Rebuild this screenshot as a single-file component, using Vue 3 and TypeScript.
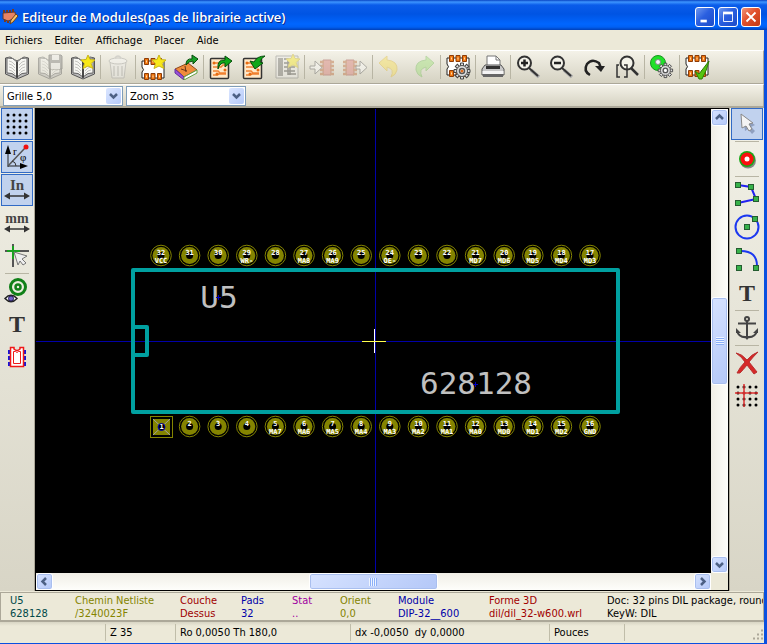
<script setup lang="ts">
import { ref } from 'vue'

interface Tool { id: string; label: string; icon: string; off?: boolean }
interface Pad { num: number; name: string; x: number; y: number }

const pcb = (x: number, y: number): string => `<g transform="translate(${x} ${y})">
<path d="M1 4H23V21H1V15Q4 13 1 10Z" fill="#fff" stroke="#222" stroke-width="1"/>
<g fill="#f07810" stroke="#8c3c08"><path d="M3.500 1.500h4v6h-4zM10 1.500h4v6h-4zM16.500 1.500h4v6h-4zM3.500 16.500h4v6h-4zM10 16.500h4v6h-4zM16.500 16.500h4v6h-4z"/></g>
<path d="M5 4.500h1M11.500 4.500h1M18 4.500h1M5 19.500h1M11.500 19.500h1M18 19.500h1" stroke="#ffd9b0" stroke-width="2"/></g>`
const openBook = `<path d="M1.500 4L6 3L13 7L20 3L24.500 4V20L13 25L1.500 20Z" fill="#bbb" stroke="#555"/>
<path d="M3 4Q9 3 13 8V23Q8 18 3 19ZM23 4Q17 3 13 8V23Q18 18 23 19Z" fill="#f6f6f2" stroke="#666"/>
<path d="M5 7q3 0 6 4M5 10q3 0 6 4M5 13q3 0 6 4M5 16q3 0 6 4M21 7q-3 0-6 4M21 10q-3 0-6 4M21 13q-3 0-6 4M21 16q-3 0-6 4" fill="none" stroke="#c4c4c0"/>
<path d="M13 8V24" stroke="#333" stroke-width="1.500"/>`
const star = (x: number, y: number): string => `<path transform="translate(${x} ${y})" d="M0-7L2-2.500L7-2L3 1.500L5 6.500L0 4L-5 6.500L-3.500 1.500L-7-2L-2-2.500Z" fill="#f8e818" stroke="#c9b51a"/>`
const sheet = `<rect x="2.500" y="4.500" width="18" height="20" rx="1" fill="#ffe8c8" stroke="#333" stroke-width="1.500"/>
<path d="M5 9h5l2 2M5 13h8l2-2h3M5 17h5l2 2h6M5 21h4l2-1h7" fill="none" stroke="#f08030" stroke-width="1.500"/><circle cx="6" cy="9" r="1.500" fill="#e66b10"/><circle cx="17" cy="16" r="1.500" fill="#e66b10"/><circle cx="9" cy="20" r="1.500" fill="#e66b10"/>`
const teeth = Array.from({ length: 8 }, (_, i) => `<path d="M-1.500-8h3v3h-3z" transform="rotate(${i * 45})"/>`).join('')
const gear = (x: number, y: number): string => `<g transform="translate(${x} ${y})"><g fill="#ddd" stroke="#444">${teeth}</g><circle r="5.500" fill="#ddd" stroke="#555"/><circle r="2.500" fill="#fff" stroke="#555" stroke-width="1.500"/></g>`
const ic = `<path d="M8 6h8v15H8z" fill="#d9736e" stroke="#9c3c38"/><path d="M5 8h4M5 12h4M5 16h4M5 20h4M15 8h4M15 12h4M15 16h4M15 20h4" stroke="#b8602c" stroke-width="2.500"/>`
const lens = `<path d="M16 16L24 23" stroke="#aaa" stroke-width="3.500"/><path d="M14 14L23 22" stroke="#333" stroke-width="2"/><circle cx="9.500" cy="9" r="6.500" fill="#f4f3ea" stroke="#333" stroke-width="2"/>`
const arrows = `<path d="M4 19H22" stroke="#333" stroke-width="1.500"/><path d="M0 19L6 15.500V22.500ZM26 19L20 15.500V22.500Z" fill="#333"/>`
const greenArrow = `<path d="M10 15Q9 5 17 6V2L24 7L17 13V9Q12 8 10 15Z" fill="#10a818" stroke="#064d0b"/>`
const dot = (x: number, y: number): string => `<rect x="${x - 2.5}" y="${y - 2.5}" width="5" height="5" fill="#37b24a" stroke="#245c30"/>`
const grid = (xs: number[], ys: number[]): string => ys.flatMap(y => xs.map(x => `<circle cx="${x}" cy="${y}" r="1.500"/>`)).join('')
const letterT = `<text x="13" y="21" text-anchor="middle" font-family="Liberation Serif, serif" font-size="24" font-weight="bold" fill="#333">T</text>`

const groups: Tool[][] = [
  [
    { id: 'lib', label: 'Librairie active', icon: openBook },
    { id: 'savelib', label: 'Sauver en librairie', off: true, icon: `${openBook}<path d="M12 1h12l1 1v13H12z" fill="#777" stroke="#444"/><path d="M15 1h7v5h-7zM14 9h9v6h-9z" fill="#eee"/>` },
    { id: 'newlib', label: 'Nouvelle librairie', icon: openBook + star(18, 8) },
  ],
  [{ id: 'trash', label: 'Supprimer', off: true, icon: '<path d="M5 8H21L19 24H7Z" fill="#eee" stroke="#999"/><ellipse cx="13" cy="7" rx="9" ry="3" fill="#f8f8f8" stroke="#999"/><path d="M10 4q3-4 6 0M9 12v10M13 12v10M17 12v10" stroke="#aaa" stroke-width="1.500" fill="none"/>' }],
  [
    { id: 'newmod', label: 'Nouveau module', icon: pcb(1, 3) + star(19, 8) },
    { id: 'loadlib', label: 'Charger module', icon: `<path d="M2 15L15 9L24 16L11 23Z" fill="#ef8c3c" stroke="#8f481b"/><path d="M2 15L11 23V26L2 19Z" fill="#9b50d8" stroke="#60309c"/><path d="M11 23L24 16V19L11 26Z" fill="#fff" stroke="#60a040"/><path d="M8 15l6 2M12 12l1 6" stroke="#67351b"/><path d="M13 11Q13 4 19 5V1L25 5L20 10V7Q16 7 13 11Z" fill="#18a026" stroke="#064d0b"/>` },
  ],
  [
    { id: 'loadboard', label: 'Charger module du C.I.', icon: sheet + greenArrow },
    { id: 'update', label: 'Remplacer module', icon: sheet + '<path d="M24 2Q20 4 19 8L22 9L14 15L9 7L13 8Q16 2 24 2Z" fill="#10a818" stroke="#064d0b"/>' },
    { id: 'insert', label: 'Placer module', off: true, icon: `<path d="M2 2H24V24H2Z" fill="#eee" stroke="#777"/><path d="M4 4h5v18H4z" fill="#666"/><path d="M10 5h4v16M10 9h6v12M10 13h11M10 17h11M14 20h8" fill="none" stroke="#333" stroke-width="1.500"/>${star(19, 7)}` },
  ],
  [
    { id: 'import', label: 'Importer', off: true, icon: `<g transform="translate(6 0)">${ic}</g><path d="M1 12H6V7L13 13.500L6 20V15H1Z" fill="#fff" stroke="#555"/>` },
    { id: 'export', label: 'Exporter', off: true, icon: `<g transform="translate(-4 0)">${ic}</g><path d="M14 12H18V7L25 13.500L18 20V15H14Z" fill="#fff" stroke="#555"/>` },
  ],
  [
    { id: 'undo', label: 'Annuler', off: true, icon: '<path d="M2 9L10 2V6Q21 7 20 16Q19 21 14 23Q18 15 10 13V17Z" fill="#fbe04a" stroke="#e0bb35"/>' },
    { id: 'redo', label: 'Refaire', off: true, icon: '<path d="M24 9L16 2V6Q5 7 6 16Q7 21 12 23Q8 15 16 13V17Z" fill="#98e070" stroke="#74bb58"/>' },
  ],
  [{ id: 'props', label: 'Propriétés du module', icon: `${pcb(1, 0)}${gear(17, 17)}<circle cx="17" cy="17" r="1.500" fill="#e06a1c"/>` }],
  [{ id: 'print', label: 'Imprimer', icon: '<path d="M7 12V2H16L20 6V12Z" fill="#fff" stroke="#777"/><path d="M16 2V6H20" fill="none" stroke="#777"/><path d="M5 11H21L24 15V21H2V15Z" fill="#c8c8c8" stroke="#555"/><path d="M6 12H20V15H6Z" fill="#333"/><path d="M2.500 17H23.500V20H2.500Z" fill="#f4f4f4"/><path d="M3 20H23V23H3Z" fill="#666"/>' }],
  [
    { id: 'zoomin', label: 'Zoom +', icon: `${lens}<path d="M6 9H13M9.500 5.500V12.500" stroke="#222" stroke-width="2.500"/>` },
    { id: 'zoomout', label: 'Zoom -', icon: `${lens}<path d="M6 9H13" stroke="#222" stroke-width="2.500"/>` },
    { id: 'redraw', label: 'Redessin', icon: '<path d="M9 21Q2 17 6 10Q11 4 18 9L20 14" fill="none" stroke="#222" stroke-width="2.500"/><path d="M14 12H24L20 18Z" fill="#222"/>' },
    { id: 'fit', label: 'Zoom automatique', icon: '<circle cx="13" cy="9" r="6.500" fill="#f4f3ea" stroke="#333" stroke-width="2"/><path d="M17 14L24 21" stroke="#333" stroke-width="2.500"/><path d="M5 11H3V23H6M10 11H13V23H10" fill="none" stroke="#333" stroke-width="1.500"/>' },
  ],
  [{ id: 'pads', label: 'Réglage pads', icon: `<circle cx="9" cy="9" r="7.500" fill="#1fe02a" stroke="#18951e"/><circle cx="9" cy="8" r="2.500" fill="#f4f4ff" stroke="#888"/><g transform="translate(2 2) scale(0.900)">${gear(16, 16)}</g>` }],
  [{ id: 'check', label: 'Vérifier module', icon: `${pcb(1, 0)}<path d="M11 17L15 20L25 7Q23 16 18 25H15Z" fill="#55c410" stroke="#2c7d07"/>` }],
]

const leftTools: Tool[][] = [
  [
    { id: 'grid', label: 'Grille', icon: grid([4, 10, 16, 22], [4, 10, 16, 22]) },
    { id: 'polar', label: 'Coordonnées polaires', icon: '<path d="M4 23V8M4 22H19" stroke="#222"/><path d="M4 1L7 10H1ZM24 22L16 19V25Z" fill="#000"/><path d="M4 22L21 4" stroke="#555" stroke-width="1.500"/><circle cx="22" cy="3" r="2.500" fill="#f01010"/><path d="M8 17Q12 18 12 22" fill="none" stroke="#333"/><text x="9" y="11" font-family="Liberation Serif, serif" font-size="11">r</text><text x="16" y="17" font-family="Liberation Serif, serif" font-size="11">φ</text>' },
    { id: 'inch', label: 'Unités en pouces', icon: `<text x="13" y="13" text-anchor="middle" font-family="Liberation Serif, serif" font-size="15" font-weight="bold" fill="#444">In</text>${arrows}` },
    { id: 'mm', label: 'Unités en millimètres', icon: `<text x="13" y="13" text-anchor="middle" font-family="Liberation Serif, serif" font-size="14" font-weight="bold" fill="#444">mm</text>${arrows}` },
    { id: 'cursor', label: 'Forme du curseur', icon: '<path d="M9 1V24M1 8H25" stroke="#555" stroke-width="2"/><path d="M9 3V16M3 8H16" stroke="#18a020" stroke-width="2"/><path d="M10 9L23 13L18 16L22 20L19 22L16 18L14 22Z" fill="#eee" stroke="#777"/>' },
  ],
  [
    { id: 'showpads', label: 'Afficher pads', icon: '<circle cx="14" cy="9" r="7.500" fill="#ececdf" stroke="#108018" stroke-width="3"/><circle cx="14" cy="9" r="2.500" fill="none" stroke="#108018" stroke-width="2.500"/><path d="M1 20.500Q7 14 13 20.500Q7 27 1 20.500Z" fill="#fff" stroke="#222" stroke-width="1.500"/><circle cx="7" cy="20.500" r="2.500" fill="#7464c8" stroke="#221c55"/>' },
    { id: 'showtext', label: 'Afficher textes', icon: letterT },
    { id: 'showedge', label: 'Afficher contours', icon: '<path d="M5 6v4M5 12v4M5 18v4M21 6v4M21 12v4M21 18v4" stroke="#1515d8" stroke-width="2"/><path d="M6.500 3.500H10V5Q13 8 16 5V3.500H19.500V22.500H6.500Z" fill="#fff" stroke="#f01818" stroke-width="1.500"/><path d="M9.500 7.500h2q1.500 2 3 0h2v12h-7z" fill="#fff" stroke="#f01818"/>' },
  ],
]

const rightTools: Tool[][] = [
  [{ id: 'select', label: 'Sélection', icon: '<path d="M9 6L21 14L17 16L21 20L18 23L14 18L11 20Z" fill="#8fa0c0"/><path d="M7 3L19 12L15 13L18 18L15 20L12 15L8 17Z" fill="#f4f4f4" stroke="#888"/>' }],
  [{ id: 'addpad', label: 'Ajouter pad', icon: '<circle cx="14" cy="14.500" r="8" fill="#888"/><circle cx="13" cy="13" r="8" fill="#18a818"/><circle cx="13" cy="13" r="6.500" fill="#fa1010"/><circle cx="13" cy="13" r="2.500" fill="#fff"/>' }],
  [
    { id: 'line', label: 'Ligne', icon: `<path d="M4 4L17 6L22 18L4 22" fill="none" stroke="#2222f0" stroke-width="2"/>${dot(4, 4)}${dot(17, 6)}${dot(22, 18)}${dot(4, 22)}` },
    { id: 'circle', label: 'Cercle', icon: `<circle cx="13" cy="13" r="11.500" fill="none" stroke="#1c38f0" stroke-width="2"/>${dot(13, 13)}${dot(21, 5)}` },
    { id: 'arc', label: 'Arc', icon: `<path d="M5 4Q24 3 23 21" fill="none" stroke="#1c38f0" stroke-width="2"/>${dot(5, 4)}${dot(5, 21)}${dot(22, 21)}` },
    { id: 'text', label: 'Texte', icon: letterT },
  ],
  [{ id: 'anchor', label: 'Ancre', icon: '<g fill="none" stroke="#444" stroke-width="2"><circle cx="13" cy="4" r="2"/><path d="M13 6V22M4 8.500H22"/><path d="M3 16Q5 23 13 22Q21 23 23 16"/></g><path d="M2 13L7 18H2ZM24 13L19 18H24ZM10 21H16L13 25Z" fill="#444"/>' }],
  [
    { id: 'delete', label: 'Supprimer élément', icon: '<path d="M2 3Q8 4 13 10Q18 4 24 2Q19 7 15 12L23 22L20 24L13 15Q9 20 6 23H3Q6 17 11 12Q8 7 2 3Z" fill="#d62828" stroke="#b83030"/>' },
    { id: 'origin', label: 'Origine grille', icon: `${grid([4, 10, 16, 22], [4, 10, 16, 22])}<path d="M1 10H24M10 1V24" stroke="#e03030" stroke-width="1.500"/>` },
  ],
]

const activeLeft = ref<string[]>(['grid', 'polar', 'inch'])
const activeRight = ref('select')
const menus = ['Fichiers', 'Editer', 'Affichage', 'Placer', 'Aide']

const toggle = (id: string): void => {
  activeLeft.value = activeLeft.value.includes(id)
    ? activeLeft.value.filter(v => v !== id)
    : [...activeLeft.value, id]
}

const topNames = ['VCC', '', '', 'WR-', '', 'MA8', 'MA9', '', 'OE-', '', '', 'MD7', 'MD6', 'MD5', 'MD4', 'MD3']
const bottomNames = ['', '', '', '', 'MA7', 'MA6', 'MA5', 'MA4', 'MA3', 'MA2', 'MA1', 'MA0', 'MD0', 'MD1', 'MD2', 'GND']
const pitch = 28.6
const pads: Pad[] = [
  ...topNames.map((name, i) => ({ num: 32 - i, name, x: 161 + i * pitch, y: 255.5 })),
  ...bottomNames.map((name, i) => ({ num: i + 1, name, x: 161 + i * pitch, y: 426.5 })),
]

const info = [
  { label: 'U5', value: '628128', tone: 'teal' },
  { label: 'Chemin Netliste', value: '/3240023F', tone: 'olive' },
  { label: 'Couche', value: 'Dessus', tone: 'red' },
  { label: 'Pads', value: '32', tone: 'blue' },
  { label: 'Stat', value: '..', tone: 'purple' },
  { label: 'Orient', value: '0,0', tone: 'olive' },
  { label: 'Module', value: 'DIP-32__600', tone: 'blue' },
  { label: 'Forme 3D', value: 'dil/dil_32-w600.wrl', tone: 'red' },
  { label: 'Doc: 32 pins DIL package, round', value: 'KeyW: DIL', tone: 'black' },
]
</script>

<template>
  <div class="window">
    <header class="title">
      <svg class="logo" viewBox="0 0 16 16" aria-hidden="true">
        <path d="M2 1v4M5 1v3M8 1v3M11 0v3M3 9v4M6 10v4" stroke="#7a3b20" stroke-width="2" />
        <path d="M1 4L13 3L14 9L6 12L1 10Z" fill="#e78364" stroke="#5c3a32" />
        <path d="M14 5L9 11L8 15L11 13L16 7Z" fill="#f6c468" stroke="#70401a" />
      </svg>
      <h1>Editeur de Modules(pas de librairie active)</h1>
      <button class="win" aria-label="Réduire"><svg viewBox="0 0 20 20"><path d="M5 14.500H12" stroke="#fff" stroke-width="3" /></svg></button>
      <button class="win" aria-label="Agrandir"><svg viewBox="0 0 20 20"><path d="M5 5.500H15V15H5Z" fill="none" stroke="#fff" /><path d="M4.500 5.500H15.500" stroke="#fff" stroke-width="3" /></svg></button>
      <button class="win close" aria-label="Fermer"><svg viewBox="0 0 20 20"><path d="M5 5L15 15M15 5L5 15" stroke="#fff" stroke-width="2" /></svg></button>
    </header>

    <div class="client">
      <nav class="menu">
        <button v-for="m in menus" :key="m">{{ m }}</button>
      </nav>

      <div class="bar" role="toolbar" aria-label="Outils">
        <div v-for="(g, i) in groups" :key="i" class="group">
          <button v-for="t in g" :key="t.id" class="tool" :disabled="t.off" :aria-label="t.label">
            <svg viewBox="0 0 26 26" v-html="t.icon" />
          </button>
        </div>
      </div>

      <div class="bar options">
        <div class="combo">
          <select aria-label="Grille"><option>Grille 5,0</option></select>
          <span class="arrow"><svg viewBox="0 0 15 16"><path d="M4 6L7.500 9.500L11 6" /></svg></span>
        </div>
        <div class="combo">
          <select aria-label="Zoom"><option>Zoom 35</option></select>
          <span class="arrow"><svg viewBox="0 0 15 16"><path d="M4 6L7.500 9.500L11 6" /></svg></span>
        </div>
      </div>

      <main class="work">
        <div class="side left" role="toolbar" aria-label="Affichage">
          <div v-for="(g, i) in leftTools" :key="i" class="group">
            <button v-for="t in g" :key="t.id" class="tool" :class="{ on: activeLeft.includes(t.id) }" :aria-label="t.label" @click="toggle(t.id)">
              <svg viewBox="0 0 26 26" v-html="t.icon" />
            </button>
          </div>
        </div>

        <div class="view">
          <svg class="canvas" viewBox="36 109 675 464" role="img" aria-label="Module U5">
            <path d="M0 341.500H800M375.500 0V700" stroke="#0000a8" />
            <g fill="none" stroke="#00a0a0" stroke-width="4" stroke-linejoin="round">
              <rect x="133" y="270" width="485" height="142" />
              <path d="M133 327H147V355H133" />
            </g>
            <g v-for="p in pads" :key="p.num" class="pad">
              <template v-if="p.num === 1">
                <rect x="150.500" y="416.500" width="22" height="21" fill="none" stroke="#848400" />
                <rect x="153" y="419" width="17" height="16" fill="#848400" />
                <path d="M153 419L170 435M170 419L153 435" stroke="#a0a0a0" />
                <circle cx="161.500" cy="427" r="3.500" fill="#000" stroke="#0000a8" />
                <text x="161.500" y="429">1</text>
              </template>
              <template v-else>
                <circle :cx="p.x" :cy="p.y" r="10.300" fill="none" stroke="#848400" />
                <circle :cx="p.x" :cy="p.y" r="8.500" fill="#848400" />
                <circle :cx="p.x" :cy="p.y" r="3.500" fill="#000" />
                <text :x="p.x" :y="p.y - 1">{{ p.num }}</text>
                <text v-if="p.name" :x="p.x" :y="p.y + 7">{{ p.name }}</text>
              </template>
            </g>
            <g class="label">
              <text x="219" y="308">U5</text>
              <text x="476" y="394">628128</text>
            </g>
            <path d="M216 297.500H221M218.500 295V300M473 384.500H478M475.500 382V387" stroke="#0000c0" />
            <path d="M374.500 329V353" stroke="#fff" />
            <path d="M362 341.500H386" stroke="#ffff50" />
          </svg>
          <div class="scroll vertical">
            <button aria-label="Haut"><svg viewBox="0 0 15 15"><path d="M4 9L7.500 5.500L11 9" /></svg></button>
            <div class="gap" />
            <div class="thumb"><i /></div>
            <div class="gap" />
            <button aria-label="Bas"><svg viewBox="0 0 15 15"><path d="M4 6L7.500 9.500L11 6" /></svg></button>
          </div>
          <div class="scroll horizontal">
            <button aria-label="Gauche"><svg viewBox="0 0 15 15"><path d="M9 4L5.500 7.500L9 11" /></svg></button>
            <div class="gap" />
            <div class="thumb"><i /></div>
            <div class="gap" />
            <button aria-label="Droite"><svg viewBox="0 0 15 15"><path d="M6 4L9.500 7.500L6 11" /></svg></button>
          </div>
        </div>

        <div class="side right" role="toolbar" aria-label="Edition">
          <div v-for="(g, i) in rightTools" :key="i" class="group">
            <button v-for="t in g" :key="t.id" class="tool" :class="{ on: activeRight === t.id }" :aria-label="t.label" @click="activeRight = t.id">
              <svg viewBox="0 0 26 26" v-html="t.icon" />
            </button>
          </div>
        </div>
      </main>

      <dl class="info">
        <div v-for="f in info" :key="f.label" :class="f.tone">
          <dt>{{ f.label }}</dt>
          <dd>{{ f.value }}</dd>
        </div>
      </dl>

      <footer class="status">
        <span />
        <span>Z 35</span>
        <span>Ro 0,0050 Th 180,0</span>
        <span>dx -0,0050&nbsp; dy 0,0000</span>
        <span>Pouces</span>
        <span class="grip">
          <svg viewBox="0 0 12 12"><path d="M9 1.500h2M5 5.500h2M9 5.500h2M1 9.500h2M5 9.500h2M9 9.500h2" stroke="#aca899" stroke-width="2" /></svg>
        </span>
      </footer>
    </div>
  </div>
</template>

<style>
body {
  margin: 0;
  overflow: hidden;
}
</style>

<style scoped>
.window {
  box-sizing: border-box;
  display: flex;
  flex-direction: column;
  height: 100vh;
  background: #0a50e0;
  color: #000;
  font: 11px/13px "DejaVu Sans Condensed", "Noto Sans", sans-serif;
}
button {
  padding: 0;
  border: 0;
  background: none;
  color: inherit;
  font: inherit;
}
.title {
  display: flex;
  align-items: center;
  gap: 3px;
  height: 30px;
  padding: 3px 6px 0 2px;
  box-sizing: border-box;
  background: linear-gradient(#0844c4, #3d95ff 2px, #0a5cea 5px, #0054e3 14px, #0066ff 24px, #0060f4 27px, #0040b8);
}
.logo {
  width: 16px;
  height: 16px;
}
h1 {
  flex: 1;
  margin: 0 0 0 1px;
  overflow: hidden;
  color: #fff;
  font: 600 13px/20px "Open Sans", "Noto Sans", sans-serif;
  text-shadow: 1px 1px #0a2a8c;
  white-space: nowrap;
}
.win {
  box-sizing: border-box;
  width: 20px;
  height: 20px;
  border: 1px solid #fff;
  border-radius: 3px;
  background: linear-gradient(135deg, #6f98ee, #2a5fe0 45%, #1d4bc8);
}
.win.close {
  background: linear-gradient(135deg, #f0957a, #e2502c 45%, #c43a14);
}
.win svg {
  display: block;
}
.client {
  flex: 1;
  display: flex;
  flex-direction: column;
  min-height: 0;
  margin: 0 3px 1px 0;
  background: #ece9d8;
}
.menu {
  display: flex;
  gap: 12px;
  height: 20px;
  padding: 0 5px;
}
.bar {
  box-sizing: border-box;
  display: flex;
  height: 34px;
  border-top: 1px solid #fff;
  border-bottom: 1px solid #aca899;
  border-right: 1px solid #aca899;
  background: linear-gradient(#f4f2e8, #d5d2c2);
}
.group {
  display: flex;
}
.bar .group + .group::before {
  content: "";
  width: 1px;
  margin: 4px 0 4px 1px;
  background: #b8b5a4;
}
.tool {
  display: grid;
  place-items: center;
  box-sizing: border-box;
  width: 33px;
  height: 32px;
}
.tool svg {
  width: 26px;
  height: 26px;
}
.tool:disabled svg {
  opacity: 0.4;
}
.tool.on {
  border: 1px solid #316ac5;
  background: #c1d2ee;
}
.options {
  gap: 3px;
  height: 24px;
  padding: 1px 3px 0;
  border-bottom: 2px solid #aca899;
}
.combo {
  position: relative;
  width: 120px;
  height: 20px;
}
select {
  appearance: none;
  width: 100%;
  height: 100%;
  padding: 0 20px 0 3px;
  border: 1px solid #7f9db9;
  border-radius: 0;
  background: #fff;
  color: #000;
  font: inherit;
}
.arrow {
  position: absolute;
  top: 2px;
  right: 2px;
  width: 15px;
  height: 16px;
  border-radius: 2px;
  background: linear-gradient(135deg, #dbe6ff, #b5cafa);
  pointer-events: none;
}
.arrow svg {
  display: block;
}
.arrow path,
.scroll path {
  fill: none;
  stroke: #4d6185;
  stroke-width: 2.5;
}
.work {
  flex: 1;
  display: flex;
  min-height: 0;
}
.side {
  padding: 0 1px;
  overflow: hidden;
  background: linear-gradient(#f2f1e7, #d8d5c6);
}
.side .group {
  flex-direction: column;
}
.side .tool {
  width: 32px;
  margin-bottom: 1px;
}
.side .group + .group::before {
  content: "";
  height: 1px;
  margin: 0 4px 1px;
  background: #b8b5a4;
}
.left {
  border-right: 1px solid #aca899;
}
.right {
  border-left: 1px solid #aca899;
}
.view {
  flex: 1;
  display: grid;
  grid-template: minmax(0, 1fr) 17px / minmax(0, 1fr) 17px;
  min-width: 0;
  border: 1px solid #000;
  background: #ece9d8;
}
.canvas {
  display: block;
  width: 100%;
  height: 100%;
  background: #000;
}
.pad text {
  fill: #fff;
  font: bold 7px "DejaVu Sans Mono", monospace;
  text-anchor: middle;
}
.label text {
  fill: #c0c0c0;
  font: 31px "DejaVu Sans Mono", monospace;
  text-anchor: middle;
}
.scroll {
  display: flex;
  background: linear-gradient(90deg, #f0eee6, #fefefb);
}
.vertical {
  flex-direction: column;
}
.horizontal {
  background: linear-gradient(#f0eee6, #fefefb);
}
.scroll button,
.thumb {
  box-sizing: border-box;
  border: 1px solid #fff;
  border-radius: 3px;
  background: linear-gradient(135deg, #d6e2ff, #b4c8f8);
  box-shadow: inset 0 0 0 1px #a9bfef;
}
.scroll button {
  flex: none;
  width: 17px;
  height: 17px;
}
.scroll svg {
  display: block;
}
.gap {
  flex: 2;
}
.thumb {
  flex: 1;
  display: grid;
  place-items: center;
}
.thumb i {
  width: 8px;
  height: 8px;
  background: repeating-linear-gradient(90deg, #eef4ff 0 1px, #8cb0f8 1px 2px);
}
.vertical .thumb i {
  background: repeating-linear-gradient(#eef4ff 0 1px, #8cb0f8 1px 2px);
}
.info {
  display: grid;
  grid-template-columns: 65px 105px 61px 51px 48px 58px 91px 118px minmax(0, 1fr);
  margin: 1px 0 0;
  padding: 1px 0 0 9px;
  border: 1px solid #aca899;
  border-bottom-width: 2px;
  overflow: hidden;
  white-space: nowrap;
}
.info > div {
  min-width: 0;
}
.info > div:last-child {
  overflow: hidden;
}
dd {
  margin: 0;
}
.teal { color: #004848; }
.olive { color: #848400; }
.red { color: #a00000; }
.blue { color: #0000a8; }
.purple { color: #a000a0; }
.black { color: #000; }
.status {
  display: grid;
  grid-template-columns: 105px 70px 175px 199px 75px minmax(0, 1fr);
  padding: 2px 0;
  background: linear-gradient(#d8d5c4, #ece9d8 4px);
}
.status span {
  padding-left: 4px;
  border-left: 1px solid #c0bda9;
  line-height: 17px;
  white-space: nowrap;
}
.status span:first-child {
  border-left: 0;
}
.status .grip {
  display: flex;
  align-items: flex-end;
  justify-content: flex-end;
}
.grip svg {
  width: 12px;
  height: 12px;
}
</style>
